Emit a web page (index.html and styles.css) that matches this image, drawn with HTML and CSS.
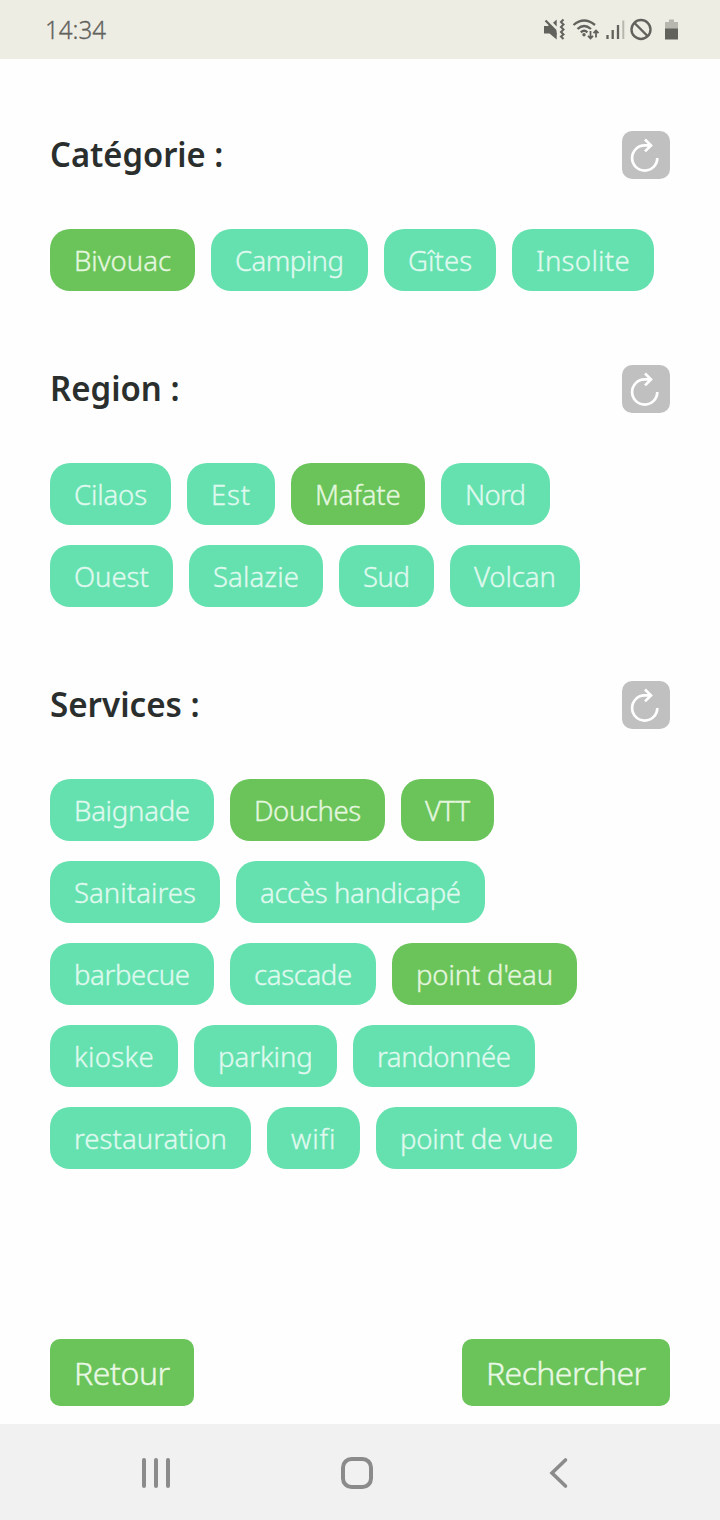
FILE: index.html
```html
<!DOCTYPE html>
<html lang="fr">
<head>
<meta charset="utf-8">
<title>Filtres</title>
<link rel="stylesheet" href="styles.css">
</head>
<body>
<header class="status">
  <span class="clock">14:34</span>
  <svg class="status-icons" width="140" height="24" viewBox="0 0 140 24" fill="none" stroke="#62625d" stroke-width="2">
    <path d="M1 8h4.500L13.700 15.500V21.500L6.500 15.500H1z" fill="#62625d" stroke="none"/>
    <path d="M6 6l7.700 7.500v3.500L5 9z" fill="#62625d" stroke="none"/>
    <path d="M2.500 2.500l10.500 10.500" stroke-width="2.200"/>
    <path d="M13.700 1.500v7L10 4.800z" fill="#62625d" stroke="none"/>
    <path d="M20.500 1.500l-2.500 2.500 2.500 2.500-2.500 2.500 2.500 2.500-2.500 2.500 2.500 2.500-2.500 2 2.500 2.500" stroke-width="2"/>
    <path d="M30.500 7q10.500-9 21.500 0M34.500 11q6.500-6 13.500 0M37.800 14.300q3.300-3 6.600 0" stroke-width="2.300"/>
    <circle cx="41" cy="16.700" r="1.700" fill="#62625d" stroke="none"/>
    <path d="M47.500 13v7.500M45 17.800l2.500 2.700 2.500-2.700M53 19.500v-7M50.500 15.200l2.500-2.700 2.500 2.700" stroke-width="1.800"/>
    <path d="M64.500 17v4M69.700 12v9M75 7v14" stroke-width="2.300"/>
    <path d="M80.300 2.500V21" stroke="#b7b7af"/>
    <circle cx="98" cy="11.500" r="9.500" stroke-width="2.400"/>
    <path d="M91.500 5l13 13" stroke-width="2.400"/>
    <path d="M122 4h4V1.500h5V4h4v7h-13z" fill="#b7b7af" stroke="none"/>
    <path d="M122 10.500h13v11h-13z" fill="#62625d" stroke="none"/>
  </svg>
</header>
<main class="filters">
  <section class="group">
    <div class="group-head"><h2 class="title t-cat">Catégorie :</h2>
      <button class="reset" aria-label="Réinitialiser"><svg width="48" height="48" viewBox="0 0 48 48"><path d="M35.300 27a12.600 12.600 0 1 1-12.600-12.600h6.500M23 8.500l6 5.900-6 6"/></svg></button></div>
    <div class="chips">
      <span class="chip on c-bivouac">Bivouac</span><span class="chip c-camping">Camping</span><span class="chip c-gites">Gîtes</span><span class="chip c-insolite">Insolite</span>
    </div>
  </section>
  <section class="group">
    <div class="group-head"><h2 class="title t-reg">Region :</h2>
      <button class="reset" aria-label="Réinitialiser"><svg width="48" height="48" viewBox="0 0 48 48"><path d="M35.300 27a12.600 12.600 0 1 1-12.600-12.600h6.500M23 8.500l6 5.900-6 6"/></svg></button></div>
    <div class="chips">
      <span class="chip c-cilaos">Cilaos</span><span class="chip c-est">Est</span><span class="chip on c-mafate">Mafate</span><span class="chip c-nord">Nord</span>
      <span class="chip c-ouest">Ouest</span><span class="chip c-salazie">Salazie</span><span class="chip c-sud">Sud</span><span class="chip c-volcan">Volcan</span>
    </div>
  </section>
  <section class="group">
    <div class="group-head"><h2 class="title t-ser">Services :</h2>
      <button class="reset" aria-label="Réinitialiser"><svg width="48" height="48" viewBox="0 0 48 48"><path d="M35.300 27a12.600 12.600 0 1 1-12.600-12.600h6.500M23 8.500l6 5.900-6 6"/></svg></button></div>
    <div class="chips narrow">
      <span class="chip c-baignade">Baignade</span><span class="chip on c-douches">Douches</span><span class="chip on c-vtt">VTT</span>
      <span class="chip c-sanitaires">Sanitaires</span><span class="chip c-acces">accès handicapé</span>
      <span class="chip c-barbecue">barbecue</span><span class="chip c-cascade">cascade</span><span class="chip on c-eau">point d'eau</span>
      <span class="chip c-kioske">kioske</span><span class="chip c-parking">parking</span><span class="chip c-randonnee">randonnée</span>
      <span class="chip c-restauration">restauration</span><span class="chip c-wifi">wifi</span><span class="chip c-vue">point de vue</span>
    </div>
  </section>
</main>
<footer class="actions"><button class="action a-retour">Retour</button><button class="action a-rechercher">Rechercher</button></footer>
<nav class="navbar">
  <svg width="34" height="34" viewBox="0 0 34 34"><path d="M5 4v26M17 4v26M29 4v26"/></svg>
  <svg width="34" height="34" viewBox="0 0 34 34"><rect x="2" y="3" width="28" height="28" rx="8.500"/></svg>
  <svg width="34" height="34" viewBox="0 0 34 34"><path d="M23.500 4L10 17 23.500 30" stroke-width="3.600"/></svg>
</nav>
</body>
</html>
```
FILE: styles.css
```css
* { box-sizing: border-box; }
body { margin: 0; height: 1520px; display: flex; flex-direction: column; background: #fefefe; font-family: "Noto Sans", sans-serif; }
.status { height: 59px; flex: none; background: #eeede4; display: flex; justify-content: space-between; align-items: center; padding: 0 37px 0 45px; }
.clock { font-size: 26px; line-height: 34px; padding-bottom: 2px; font-weight: 300; color: #62625d; -webkit-text-stroke: 0.3px; transform: scaleX(0.93); transform-origin: left; }
.filters { flex: 1; padding: 72px 50px 0; }
.group { margin-bottom: 74px; }
.group-head { display: flex; justify-content: space-between; height: 48px; margin-bottom: 50px; }
.title { margin: 0; font-size: 35px; line-height: 45px; font-weight: 600; color: #2a2f2e; white-space: nowrap; transform-origin: left; }
.t-cat { transform: scaleX(0.935); }
.t-reg { transform: scaleX(0.942); }
.t-ser { transform: scaleX(0.947); }
.reset { width: 48px; height: 48px; border: 0; padding: 0; border-radius: 10px; background: #c0c0c0; }
.reset svg { display: block; fill: none; stroke: #fff; stroke-width: 2.7; }
.chips { display: flex; flex-wrap: wrap; gap: 20px 16px; }
.narrow { padding-right: 80px; }
.chip { --fit: 0px; height: 62px; flex: none; padding-left: 24px; border-radius: 20px; background: #65e1af; color: #dff9ee; font-size: 27.5px; font-weight: 300; line-height: 64px; letter-spacing: calc(var(--fit) + 0.25px); white-space: nowrap; -webkit-text-stroke: 0.4px; }
.on { background: #6ac45a; color: #e4f6df; }
.c-bivouac { width: 145px; --fit: -0.27px; }
.c-camping { width: 157px; --fit: -0.8px; }
.c-gites { width: 112px; --fit: -0.18px; }
.c-insolite { width: 142px; --fit: 0.08px; }
.c-cilaos { width: 121px; --fit: -0.4px; }
.c-est { width: 88px; --fit: 0.6px; }
.c-mafate { width: 134px; --fit: -0.4px; }
.c-nord { width: 109px; --fit: -0.9px; }
.c-ouest { width: 123px; --fit: -0.3px; }
.c-salazie { width: 134px; --fit: -0.15px; }
.c-sud { width: 95px; --fit: -0.7px; }
.c-volcan { width: 130px; --fit: -0.35px; }
.c-baignade { width: 164px; --fit: -0.5px; }
.c-douches { width: 155px; --fit: -0.7px; }
.c-vtt { width: 93px; --fit: -0.53px; }
.c-sanitaires { width: 170px; --fit: -0.2px; }
.c-acces { width: 249px; --fit: -0.61px; }
.c-barbecue { width: 164px; --fit: -0.6px; }
.c-cascade { width: 146px; --fit: -0.6px; }
.c-eau { width: 185px; --fit: -0.4px; }
.c-kioske { width: 128px; --fit: 0.1px; }
.c-parking { width: 143px; --fit: -0.27px; }
.c-randonnee { width: 182px; --fit: -0.67px; }
.c-restauration { width: 201px; --fit: -0.19px; }
.c-wifi { width: 93px; --fit: 0.67px; }
.c-vue { width: 201px; --fit: -0.45px; }
.actions { height: 85px; flex: none; display: flex; justify-content: space-between; padding: 0 50px; }
.action { height: 67px; border: 0; padding: 0 0 0 24px; border-radius: 10px; background: #6ac45a; color: #e9f8e5; font: 300 32px "Noto Sans", sans-serif; text-align: left; -webkit-text-stroke: 0.4px; }
.a-retour { width: 144px; letter-spacing: -0.42px; }
.a-rechercher { width: 208px; letter-spacing: -0.58px; }
.navbar { height: 96px; flex: none; background: #f1f1f1; display: flex; justify-content: space-between; align-items: center; padding: 2px 144px 0 139px; }
.navbar svg { fill: none; stroke: #8b8b8b; stroke-width: 4; stroke-linecap: round; }
```
